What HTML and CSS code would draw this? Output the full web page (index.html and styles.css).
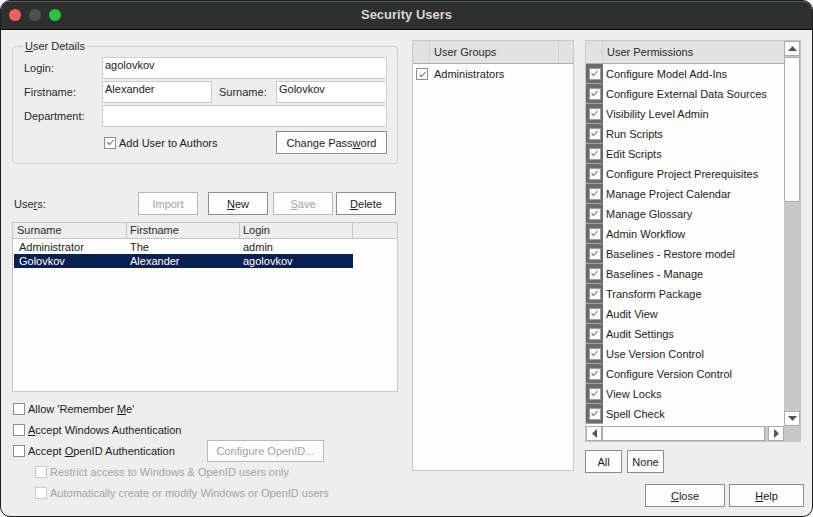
FILE: index.html
```html
<!DOCTYPE html>
<html>
<head>
<meta charset="utf-8">
<title>Security Users</title>
<link rel="stylesheet" href="styles.css">
</head>
<body>
<div class="window">
  <div class="titlebar">
    <div class="lights"><span class="light red"></span><span class="light gray"></span><span class="light green"></span></div>
    <div class="title">Security Users</div>
    <div class="spacer"></div>
  </div>
  <div class="content">
    <div class="col-left">
      <fieldset class="details">
        <legend><u>U</u>ser Details</legend>
        <div class="form">
          <span class="lbl">Login:</span><div class="input span3">agolovkov</div>
          <span class="lbl">Firstname:</span><div class="input">Alexander</div><span class="lbl lbl-sur">Surname:</span><div class="input">Golovkov</div>
          <span class="lbl">Department:</span><div class="input span3"></div>
          <span></span>
          <label class="chk authors span2"><span class="cb"><svg width="9" height="9" viewBox="0 0 9 9"><path d="M1.5 4.5 L3.5 6.5 L7.5 2" fill="none" stroke="#707070" stroke-width="1.1"/></svg></span><span>Add User to Authors</span></label>
          <button class="btn pwd">Change Pass<u>w</u>ord</button>
        </div>
      </fieldset>

      <div class="users-bar">
        <span class="users-lbl">Use<u>r</u>s:</span>
        <button class="btn ub disabled b-import">Import</button>
        <button class="btn ub b-new"><u>N</u>ew</button>
        <button class="btn ub disabled b-save"><u>S</u>ave</button>
        <button class="btn ub b-delete"><u>D</u>elete</button>
      </div>

      <div class="users-list">
        <div class="uhead">
          <div class="hc c1">Surname</div>
          <div class="hc c2">Firstname</div>
          <div class="hc c3">Login</div>
          <div class="hc c4"></div>
        </div>
        <div class="urow"><span class="uc c1">Administrator</span><span class="uc c2">The</span><span class="uc c3">admin</span></div>
        <div class="urow sel"><span class="uc c1">Golovkov</span><span class="uc c2">Alexander</span><span class="uc c3">agolovkov</span></div>
      </div>

      <div class="opts">
        <div class="opt"><label class="chk"><span class="cb"></span><span>Allow 'Remember <u>M</u>e'</span></label></div>
        <div class="opt"><label class="chk"><span class="cb"></span><span><u>A</u>ccept Windows Authentication</span></label></div>
        <div class="opt"><label class="chk openid"><span class="cb"></span><span>Accept <u>O</u>penID Authentication</span></label><button class="btn disabled cfg">Confi<u>g</u>ure OpenID...</button></div>
        <div class="opt sub"><label class="chk off"><span class="cb"></span><span>Restrict access to Windows &amp; OpenID users only</span></label></div>
        <div class="opt sub"><label class="chk off"><span class="cb"></span><span>Automatically create or modify Windows or OpenID users</span></label></div>
      </div>
    </div>

    <div class="col-mid">
      <div class="groups">
        <div class="phead"><div class="pc-first"></div><div class="pc-text">User Groups</div><div class="pc-last"></div></div>
        <div class="grow"><span class="cb"><svg width="9" height="9" viewBox="0 0 9 9"><path d="M1.5 4.5 L3.5 6.5 L7.5 2" fill="none" stroke="#707070" stroke-width="1.1"/></svg></span><span>Administrators</span></div>
      </div>
    </div>

    <div class="col-right">
      <div class="perms">
        <div class="perm-list">
          <div class="phead"><div class="pc-first"></div><div class="pc-text">User Permissions</div></div>
          <div class="prows" id="prows"></div>
        </div>
        <div class="vscroll">
          <div class="sbtn"><svg width="9" height="5" viewBox="0 0 9 5"><path d="M0 5 L4.5 0 L9 5 Z" fill="#555"/></svg></div>
          <div class="vthumb"></div>
          <div class="vtrack"></div>
          <div class="sbtn"><svg width="9" height="5" viewBox="0 0 9 5"><path d="M0 0 L4.5 5 L9 0 Z" fill="#555"/></svg></div>
        </div>
        <div class="hscroll">
          <div class="sbtn h"><svg width="5" height="9" viewBox="0 0 5 9"><path d="M5 0 L0 4.5 L5 9 Z" fill="#555"/></svg></div>
          <div class="hthumb"></div>
          <div class="sbtn h"><svg width="5" height="9" viewBox="0 0 5 9"><path d="M0 0 L5 4.5 L0 9 Z" fill="#555"/></svg></div>
        </div>
        <div class="corner"></div>
      </div>
      <div class="allnone">
        <button class="btn an">All</button>
        <button class="btn an">None</button>
      </div>
      <div class="dlg-btns">
        <button class="btn close"><u>C</u>lose</button>
        <button class="btn help"><u>H</u>elp</button>
      </div>
    </div>
  </div>
</div>
<script>
  var items = ["Configure Model Add-Ins","Configure External Data Sources","Visibility Level Admin","Run Scripts","Edit Scripts","Configure Project Prerequisites","Manage Project Calendar","Manage Glossary","Admin Workflow","Baselines - Restore model","Baselines - Manage","Transform Package","Audit View","Audit Settings","Use Version Control","Configure Version Control","View Locks","Spell Check"];
  var html = "";
  items.forEach(function (t) {
    html += '<div class="prow"><span class="pcell"><span class="cb"><svg width="9" height="9" viewBox="0 0 9 9"><path d="M1.5 4.5 L3.5 6.5 L7.5 2" fill="none" stroke="#707070" stroke-width="1.1"/></svg></span></span><span class="ptext">' + t + '</span></div>';
  });
  document.getElementById("prows").innerHTML = html;
</script>
</body>
</html>
```

FILE: styles.css
```css
* { box-sizing: border-box; }
html, body { margin: 0; padding: 0; background: #ffffff; }
body {
  font-family: "Liberation Sans", Arial, sans-serif;
  font-size: 11px;
  color: #1c1c1c;
}
u { text-decoration: underline; text-underline-offset: 1px; }

.window {
  width: 813px;
  height: 517px;
  border: 1px solid #1d1d1d;
  border-radius: 10px;
  overflow: hidden;
  background: #eeeeee;
  display: flex;
  flex-direction: column;
}

.titlebar {
  height: 29px;
  flex: none;
  display: flex;
  align-items: center;
  background: #2e302f;
  border-bottom: 1px solid #070707;
  box-shadow: inset 0 1px 0 #5a5c5b;
}
.lights { width: 80px; display: flex; gap: 8px; padding-left: 8px; }
.spacer { width: 80px; }
.light { width: 12px; height: 12px; border-radius: 50%; display: block; }
.red { background: #fe5f57; }
.gray { background: #505251; }
.green { background: #29c440; }
.title {
  flex: 1;
  text-align: center;
  color: #d6d6d6;
  font-weight: bold;
  font-size: 13px;
  padding-bottom: 1px;
}

.content {
  flex: 1;
  display: flex;
  padding: 10px 8px 0 11px;
}

/* ---------- left column ---------- */
.col-left { width: 386px; display: flex; flex-direction: column; }

.details {
  margin: 0;
  padding: 4px 10px 9px 11px;
  border: 1px solid #cdcdcd;
  border-radius: 4px;
  min-width: 0;
}
.details legend {
  padding: 0 2px;
  margin-left: -1px;
  line-height: 13px;
  color: #2a2a2a;
}
.form {
  display: grid;
  grid-template-columns: 78px 110px 64px 1fr;
  grid-template-rows: 22px 22px 22px 25px;
  row-gap: 2px;
  align-items: center;
}
.lbl { color: #2a2a2a; }
.lbl-sur { padding-left: 7px; }
.input {
  height: 22px;
  background: #ffffff;
  border: 1px solid #cbcbcb;
  padding: 1px 2px;
  line-height: 13px;
  color: #1c1c1c;
}
.span3 { grid-column: span 3; }
.span2 { grid-column: span 2; }
.authors { margin-left: 2px; align-self: end; height: 23px; }
.pwd { height: 23px; margin-left: 1px; align-self: end; }

.chk { display: flex; align-items: center; gap: 3px; white-space: nowrap; }
.cb {
  width: 12px;
  height: 12px;
  flex: none;
  background: #ffffff;
  border: 1px solid #8e8e8e;
  display: flex;
  align-items: center;
  justify-content: center;
}
.chk.off { color: #a3a3a3; }
.chk.off .cb { border-color: #c9c9c9; }

.btn {
  font-family: "Liberation Sans", Arial, sans-serif;
  font-size: 11px;
  color: #1c1c1c;
  background: #fdfdfd;
  border: 1px solid #8d8d8d;
  border-radius: 0;
  padding: 0;
  margin: 0;
}
.btn.disabled { color: #a3a3a3; border-color: #b9b9b9; }

.users-bar {
  margin-top: 28px;
  height: 23px;
  display: flex;
  align-items: center;
  padding-left: 2px;
}
.users-lbl { width: 124px; color: #2a2a2a; padding-top: 1px; }
.ub { width: 60px; height: 23px; }
.b-new { margin-left: 10px; }
.b-save { margin-left: 5px; }
.b-delete { margin-left: 3px; }

.users-list {
  margin-top: 7px;
  height: 170px;
  background: #fdfdfd;
  border: 1px solid #c8c8c8;
}
.uhead { display: flex; height: 16px; }
.hc {
  background: #ededed;
  border-right: 1px solid #c7c7c7;
  border-bottom: 1px solid #c7c7c7;
  line-height: 15px;
  color: #2a2a2a;
}
.hc.c1 { width: 114px; padding-left: 4px; }
.hc.c2 { width: 113px; padding-left: 3px; }
.hc.c3 { width: 113px; padding-left: 3px; }
.hc.c4 { flex: 1; border-right: none; }
.urow { display: flex; height: 14px; line-height: 14px; margin-left: 1px; width: 339px; }
.uhead + .urow { margin-top: 1px; }
.uc.c1 { width: 113px; padding-left: 5px; }
.uc.c2 { width: 113px; padding-left: 3px; }
.uc.c3 { width: 113px; padding-left: 3px; }
.urow.sel { background: #0b1f51; color: #ffffff; }

.opts { margin-top: 6px; }
.opt { height: 21px; display: flex; align-items: center; padding-left: 1px; }
.openid { width: 194px; }
.cfg { width: 117px; height: 22px; }
.opt.sub { padding-left: 23px; }

/* ---------- middle column ---------- */
.col-mid { width: 162px; margin-left: 14px; }
.groups {
  height: 431px;
  background: #fdfdfd;
  border: 1px solid #c8c8c8;
}
.phead {
  height: 23px;
  display: flex;
  background: #e2e2e2;
  border-bottom: 1px solid #acacac;
  color: #2a2a2a;
  line-height: 22px;
}
.pc-first { width: 17px; border-right: 1px solid #d2d2d2; }
.pc-text { flex: 1; padding-left: 4px; }
.groups .pc-text { border-right: 1px solid #d2d2d2; }
.pc-last { width: 14px; }
.grow {
  height: 20px;
  display: flex;
  align-items: center;
  gap: 6px;
  padding-left: 3px;
}

/* ---------- right column ---------- */
.col-right { width: 219px; margin-left: 11px; display: flex; flex-direction: column; }
.perms {
  width: 216px;
  height: 402px;
  border: 1px solid #c8c8c8;
  background: #c8c8c8;
  display: grid;
  grid-template-columns: 198px 16px;
  grid-template-rows: 385px 15px;
}
.perm-list { background: #fdfdfd; overflow: hidden; }
.prow { height: 20px; display: flex; align-items: center; }
.pcell {
  width: 17px;
  height: 20px;
  background: #6c6c6c;
  border-bottom: 1px solid #a3a3a3;
  display: flex;
  align-items: center;
  justify-content: center;
}
.pcell .cb { border-color: #9b9b9b; }
.ptext { padding-left: 3px; white-space: nowrap; }

.vscroll { display: flex; flex-direction: column; }
.sbtn {
  width: 16px;
  height: 15px;
  flex: none;
  background: #fdfdfd;
  border: 1px solid #ababab;
  display: flex;
  align-items: center;
  justify-content: center;
}
.vthumb { height: 145px; background: #fdfdfd; border: 1px solid #ababab; margin-top: 1px; flex: none; }
.vtrack { flex: 1; }
.hscroll { display: flex; }
.sbtn.h { width: 16px; height: 15px; }
.hthumb { width: 163px; background: #fdfdfd; border: 1px solid #ababab; margin-right: 3px; }
.corner { background: #c8c8c8; }

.allnone { margin-top: 8px; display: flex; gap: 5px; }
.an { width: 37px; height: 23px; }
.dlg-btns { margin-top: 11px; display: flex; justify-content: flex-end; gap: 4px; }
.close { width: 80px; height: 23px; }
.help { width: 75px; height: 23px; }
```
